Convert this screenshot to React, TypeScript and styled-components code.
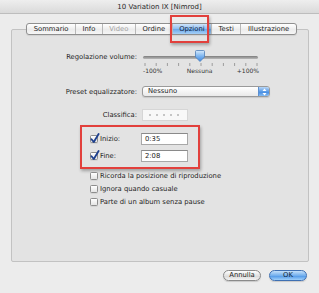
import React from "react";
import styled, { createGlobalStyle, css } from "styled-components";

const GlobalStyle = createGlobalStyle`
  *, *::before, *::after { box-sizing: border-box; }
  html, body { margin: 0; padding: 0; }
  body {
    width: 319px;
    height: 293px;
    overflow: hidden;
    background: #ececec;
    font-family: "DejaVu Sans", "Liberation Sans", sans-serif;
    font-size: 6.8px;
    color: #1e1e1e;
  }
`;

const Window = styled.div`
  width: 319px;
  height: 293px;
  display: flex;
  flex-direction: column;
  background: #ececec;
`;

const TitleBar = styled.header`
  flex: none;
  height: 14px;
  display: flex;
  align-items: center;
  justify-content: center;
  background: linear-gradient(#eeeeee, #dadada);
  border-bottom: 1px solid #bdbdbd;
  font-size: 7px;
  color: #2a2a2a;
`;

const Body = styled.div`
  flex: 1;
  display: flex;
  flex-direction: column;
  padding: 9px 10px 0 11px;
`;

const TabRow = styled.div`
  position: relative;
  z-index: 1;
  display: flex;
  justify-content: center;
  height: 12px;
  margin-bottom: -6px;
  padding-left: 3px;
`;

const TabStrip = styled.div`
  display: flex;
  border: 1px solid #8f8f8f;
  border-radius: 3px;
  background: linear-gradient(#ffffff, #ececec 55%, #f6f6f6);
  box-shadow: 0 1px 1px rgba(0, 0, 0, 0.08);
`;

const Tab = styled.div<{ $selected?: boolean; $disabled?: boolean }>`
  position: relative;
  padding: 0 6.5px;
  line-height: 10px;
  white-space: nowrap;
  color: ${(p) => (p.$disabled ? "#a3a3a3" : "#1e1e1e")};
  & + & {
    border-left: 1px solid #b8b8b8;
  }
  ${(p) =>
    p.$selected &&
    css`
      background: linear-gradient(#cfe4fa, #8dbdf0 50%, #6aa8ea 51%, #a6d0f7);
      color: #10203a;
    `}
`;

const Annotation = styled.div`
  position: absolute;
  left: -3px;
  right: 2px;
  top: -9px;
  bottom: -9px;
  border: 2px solid #e2403c;
  box-shadow: 1px 2px 3px rgba(0, 0, 0, 0.3);
  pointer-events: none;
`;

const Panel = styled.section`
  height: 233px;
  border: 1px solid #c2c2c2;
  border-radius: 2px;
  background: #e3e3e3;
  padding-top: 20px;
  display: flex;
  flex-direction: column;
`;

const FieldRow = styled.div<{ $gap?: number }>`
  display: grid;
  grid-template-columns: 125px auto;
  column-gap: 5px;
  align-items: center;
  margin-top: ${(p) => p.$gap ?? 0}px;
`;

const Label = styled.div<{ $top?: boolean }>`
  text-align: right;
  white-space: nowrap;
  ${(p) =>
    p.$top &&
    css`
      align-self: start;
      line-height: 14px;
    `}
`;

const SliderBox = styled.div`
  width: 118px;
  display: flex;
  flex-direction: column;
`;

const SliderScale = styled.div`
  display: flex;
  justify-content: space-between;
  padding: 0 1px;
  height: 7px;
  line-height: 7px;
  font-size: 6px;
  color: #333;
`;

const Popup = styled.div`
  width: 128px;
  height: 11px;
  display: flex;
  border: 1px solid #9a9a9a;
  border-radius: 3px;
  background: linear-gradient(#ffffff, #e9e9e9);
  box-shadow: 0 1px 1px rgba(0, 0, 0, 0.12);
  overflow: hidden;
`;

const PopupText = styled.span`
  flex: 1;
  padding-left: 5px;
  line-height: 9px;
`;

const PopupArrows = styled.span`
  width: 11px;
  display: flex;
  align-items: center;
  justify-content: center;
  border-left: 1px solid #5d8fcf;
  background: linear-gradient(#b9d7f7, #5c9ce6 50%, #3e86e0 51%, #88bdf2);
`;

const Rating = styled.div`
  width: 46px;
  height: 12px;
  display: flex;
  align-items: center;
  gap: 5px;
  padding-left: 6px;
  background: #f8f8f8;
  border: 1px solid #d6d6d6;
`;

const Dot = styled.span`
  width: 2px;
  height: 2px;
  border-radius: 50%;
  background: #b5b5b5;
`;

const Highlight = styled.div`
  margin: 4px 0 0 68px;
  width: 120px;
  height: 44px;
  border: 2px solid #e2403c;
  box-shadow: 1px 2px 3px rgba(0, 0, 0, 0.3);
  padding: 6px 0 0 8px;
  display: flex;
  flex-direction: column;
  gap: 5px;
`;

const TimeRow = styled.div`
  display: grid;
  grid-template-columns: 10px 41px 47px;
  align-items: center;
  height: 12px;
`;

const TextInput = styled.div`
  height: 12px;
  line-height: 10px;
  padding-left: 3px;
  background: #ffffff;
  border: 1px solid #a8a8a8;
  border-top-color: #8a8a8a;
`;

const OptionList = styled.div`
  margin-left: 78px;
  display: flex;
  flex-direction: column;
`;

const OptionRow = styled.label`
  height: 13px;
  display: flex;
  align-items: center;
  gap: 2px;
  white-space: nowrap;
`;

const Box = styled.span`
  position: relative;
  width: 8px;
  height: 8px;
  flex: none;
  border: 1px solid #8d8d8d;
  border-radius: 1.5px;
  background: linear-gradient(#ffffff, #e4e4e4);
  box-shadow: 0 1px 0 rgba(0, 0, 0, 0.06);
`;

const CheckMark = styled.svg`
  position: absolute;
  left: -1px;
  top: -3px;
`;

const ButtonRow = styled.div`
  display: flex;
  justify-content: flex-end;
  gap: 8px;
  margin-top: 8px;
  padding-right: 2px;
`;

const Button = styled.div<{ $primary?: boolean }>`
  width: 38px;
  height: 11px;
  border-radius: 6px;
  text-align: center;
  line-height: 9px;
  border: 1px solid #8a8a8a;
  background: linear-gradient(#ffffff, #e2e2e2 50%, #d6d6d6 51%, #f4f4f4);
  box-shadow: 0 1px 1px rgba(0, 0, 0, 0.15);
  ${(p) =>
    p.$primary &&
    css`
      border-color: #3f70b2;
      background: linear-gradient(#c4e0fa, #74b0ee 50%, #4b94e6 51%, #9fd0fa);
      color: #0d1c33;
    `}
`;

const Checkbox: React.FC<{ checked?: boolean }> = ({ checked }) => (
  <Box>
    {checked && (
      <CheckMark width="10" height="11" viewBox="0 0 10 11">
        <path
          d="M1.5 6.2 L3.8 9 L8.6 1"
          fill="none"
          stroke="#1d3f8e"
          strokeWidth="1.8"
          strokeLinecap="round"
          strokeLinejoin="round"
        />
      </CheckMark>
    )}
  </Box>
);

const VolumeSlider = () => {
  const ticks = Array.from({ length: 11 }, (_, i) => 3 + i * 11.2);
  return (
    <SliderBox>
      <svg width="118" height="17" viewBox="0 0 118 17">
        <defs>
          <linearGradient id="track" x1="0" y1="0" x2="0" y2="1">
            <stop offset="0" stopColor="#7d7d7d" />
            <stop offset="1" stopColor="#b9b9b9" />
          </linearGradient>
          <linearGradient id="knob" x1="0" y1="0" x2="0" y2="1">
            <stop offset="0" stopColor="#d6eafc" />
            <stop offset="0.5" stopColor="#7fb6f0" />
            <stop offset="1" stopColor="#3e86e0" />
          </linearGradient>
        </defs>
        <rect x="1" y="6" width="115" height="3" rx="1.5" fill="url(#track)" />
        {ticks.map((x) => (
          <line key={x} x1={x} y1="13" x2={x} y2="16" stroke="#8a8a8a" strokeWidth="0.8" />
        ))}
        <path
          d="M53.5 1.5 Q53.5 0.5 54.5 0.5 H61.5 Q62.5 0.5 62.5 1.5 V7 L58 11.5 L53.5 7 Z"
          fill="url(#knob)"
          stroke="#4f7fb8"
          strokeWidth="0.8"
        />
      </svg>
      <SliderScale>
        <span>-100%</span>
        <span>Nessuna</span>
        <span>+100%</span>
      </SliderScale>
    </SliderBox>
  );
};

const tabs = ["Sommario", "Info", "Video", "Ordine", "Opzioni", "Testi", "Illustrazione"];

export default function App() {
  return (
    <Window>
      <GlobalStyle />
      <TitleBar>10 Variation IX [Nimrod]</TitleBar>
      <Body>
        <TabRow>
          <TabStrip>
            {tabs.map((t) => (
              <Tab key={t} $selected={t === "Opzioni"} $disabled={t === "Video"}>
                {t}
                {t === "Opzioni" && <Annotation />}
              </Tab>
            ))}
          </TabStrip>
        </TabRow>
        <Panel>
          <FieldRow>
            <Label $top>Regolazione volume:</Label>
            <VolumeSlider />
          </FieldRow>
          <FieldRow $gap={12}>
            <Label>Preset equalizzatore:</Label>
            <Popup>
              <PopupText>Nessuno</PopupText>
              <PopupArrows>
                <svg width="5" height="8" viewBox="0 0 5 8">
                  <path d="M2.5 0.5 L4.5 3 H0.5 Z M2.5 7.5 L4.5 5 H0.5 Z" fill="#ffffff" />
                </svg>
              </PopupArrows>
            </Popup>
          </FieldRow>
          <FieldRow $gap={12}>
            <Label>Classifica:</Label>
            <Rating>
              {[0, 1, 2, 3, 4].map((i) => (
                <Dot key={i} />
              ))}
            </Rating>
          </FieldRow>
          <Highlight>
            <TimeRow>
              <Checkbox checked />
              <span>Inizio:</span>
              <TextInput>0:35</TextInput>
            </TimeRow>
            <TimeRow>
              <Checkbox checked />
              <span>Fine:</span>
              <TextInput>2:08</TextInput>
            </TimeRow>
          </Highlight>
          <OptionList>
            <OptionRow>
              <Checkbox />
              Ricorda la posizione di riproduzione
            </OptionRow>
            <OptionRow>
              <Checkbox />
              Ignora quando casuale
            </OptionRow>
            <OptionRow>
              <Checkbox />
              Parte di un album senza pause
            </OptionRow>
          </OptionList>
        </Panel>
        <ButtonRow>
          <Button>Annulla</Button>
          <Button $primary>OK</Button>
        </ButtonRow>
      </Body>
    </Window>
  );
}
